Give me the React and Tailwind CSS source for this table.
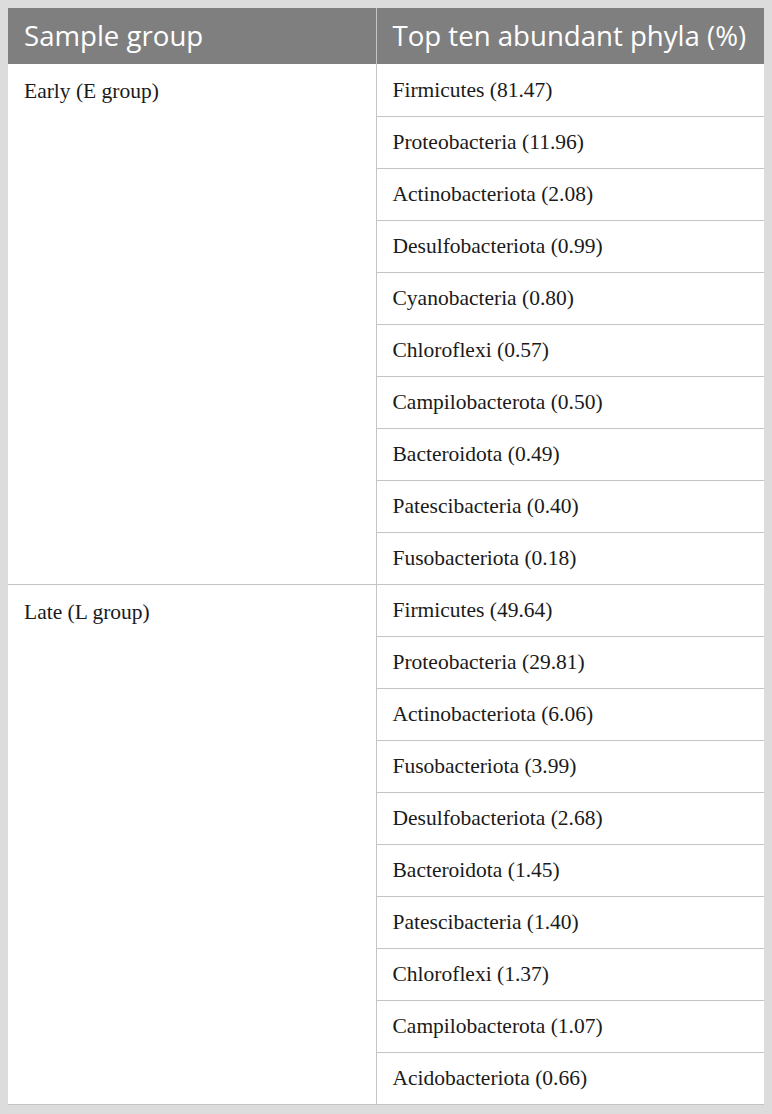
const groups = [
  {
    label: 'Early (E group)',
    phyla: [
      'Firmicutes (81.47)',
      'Proteobacteria (11.96)',
      'Actinobacteriota (2.08)',
      'Desulfobacteriota (0.99)',
      'Cyanobacteria (0.80)',
      'Chloroflexi (0.57)',
      'Campilobacterota (0.50)',
      'Bacteroidota (0.49)',
      'Patescibacteria (0.40)',
      'Fusobacteriota (0.18)',
    ],
  },
  {
    label: 'Late (L group)',
    phyla: [
      'Firmicutes (49.64)',
      'Proteobacteria (29.81)',
      'Actinobacteriota (6.06)',
      'Fusobacteriota (3.99)',
      'Desulfobacteriota (2.68)',
      'Bacteroidota (1.45)',
      'Patescibacteria (1.40)',
      'Chloroflexi (1.37)',
      'Campilobacterota (1.07)',
      'Acidobacteriota (0.66)',
    ],
  },
]

const serif = { fontFamily: '"Liberation Serif", serif' }

export default function App() {
  return (
    <div className="w-[772px] h-[1114px] bg-[#dcdcdc] p-2">
      <table className="w-[756px] table-fixed border-collapse bg-white" style={serif}>
        <colgroup>
          <col className="w-[368px]" />
          <col className="w-[388px]" />
        </colgroup>
        <thead>
          <tr className="h-[56px] bg-[#7f7f7f] text-white text-[27.6px] font-['Open_Sans',sans-serif]">
            <th className="text-left font-normal pl-4 border-r border-[#c4c4c4]">Sample group</th>
            <th className="text-left font-normal pl-4">Top ten abundant phyla (%)</th>
          </tr>
        </thead>
        <tbody className="text-[21.5px] text-[#1a1a1a]">
          {groups.map(g =>
            g.phyla.map((p, i) => (
              <tr key={g.label + i} className="h-[52px]">
                {i === 0 && (
                  <td
                    rowSpan={g.phyla.length}
                    className="align-top pl-4 pt-[11px] border-b border-r border-[#c4c4c4]"
                  >
                    {g.label}
                  </td>
                )}
                <td className="pl-4 border-b border-[#c4c4c4]">{p}</td>
              </tr>
            ))
          )}
        </tbody>
      </table>
    </div>
  )
}
